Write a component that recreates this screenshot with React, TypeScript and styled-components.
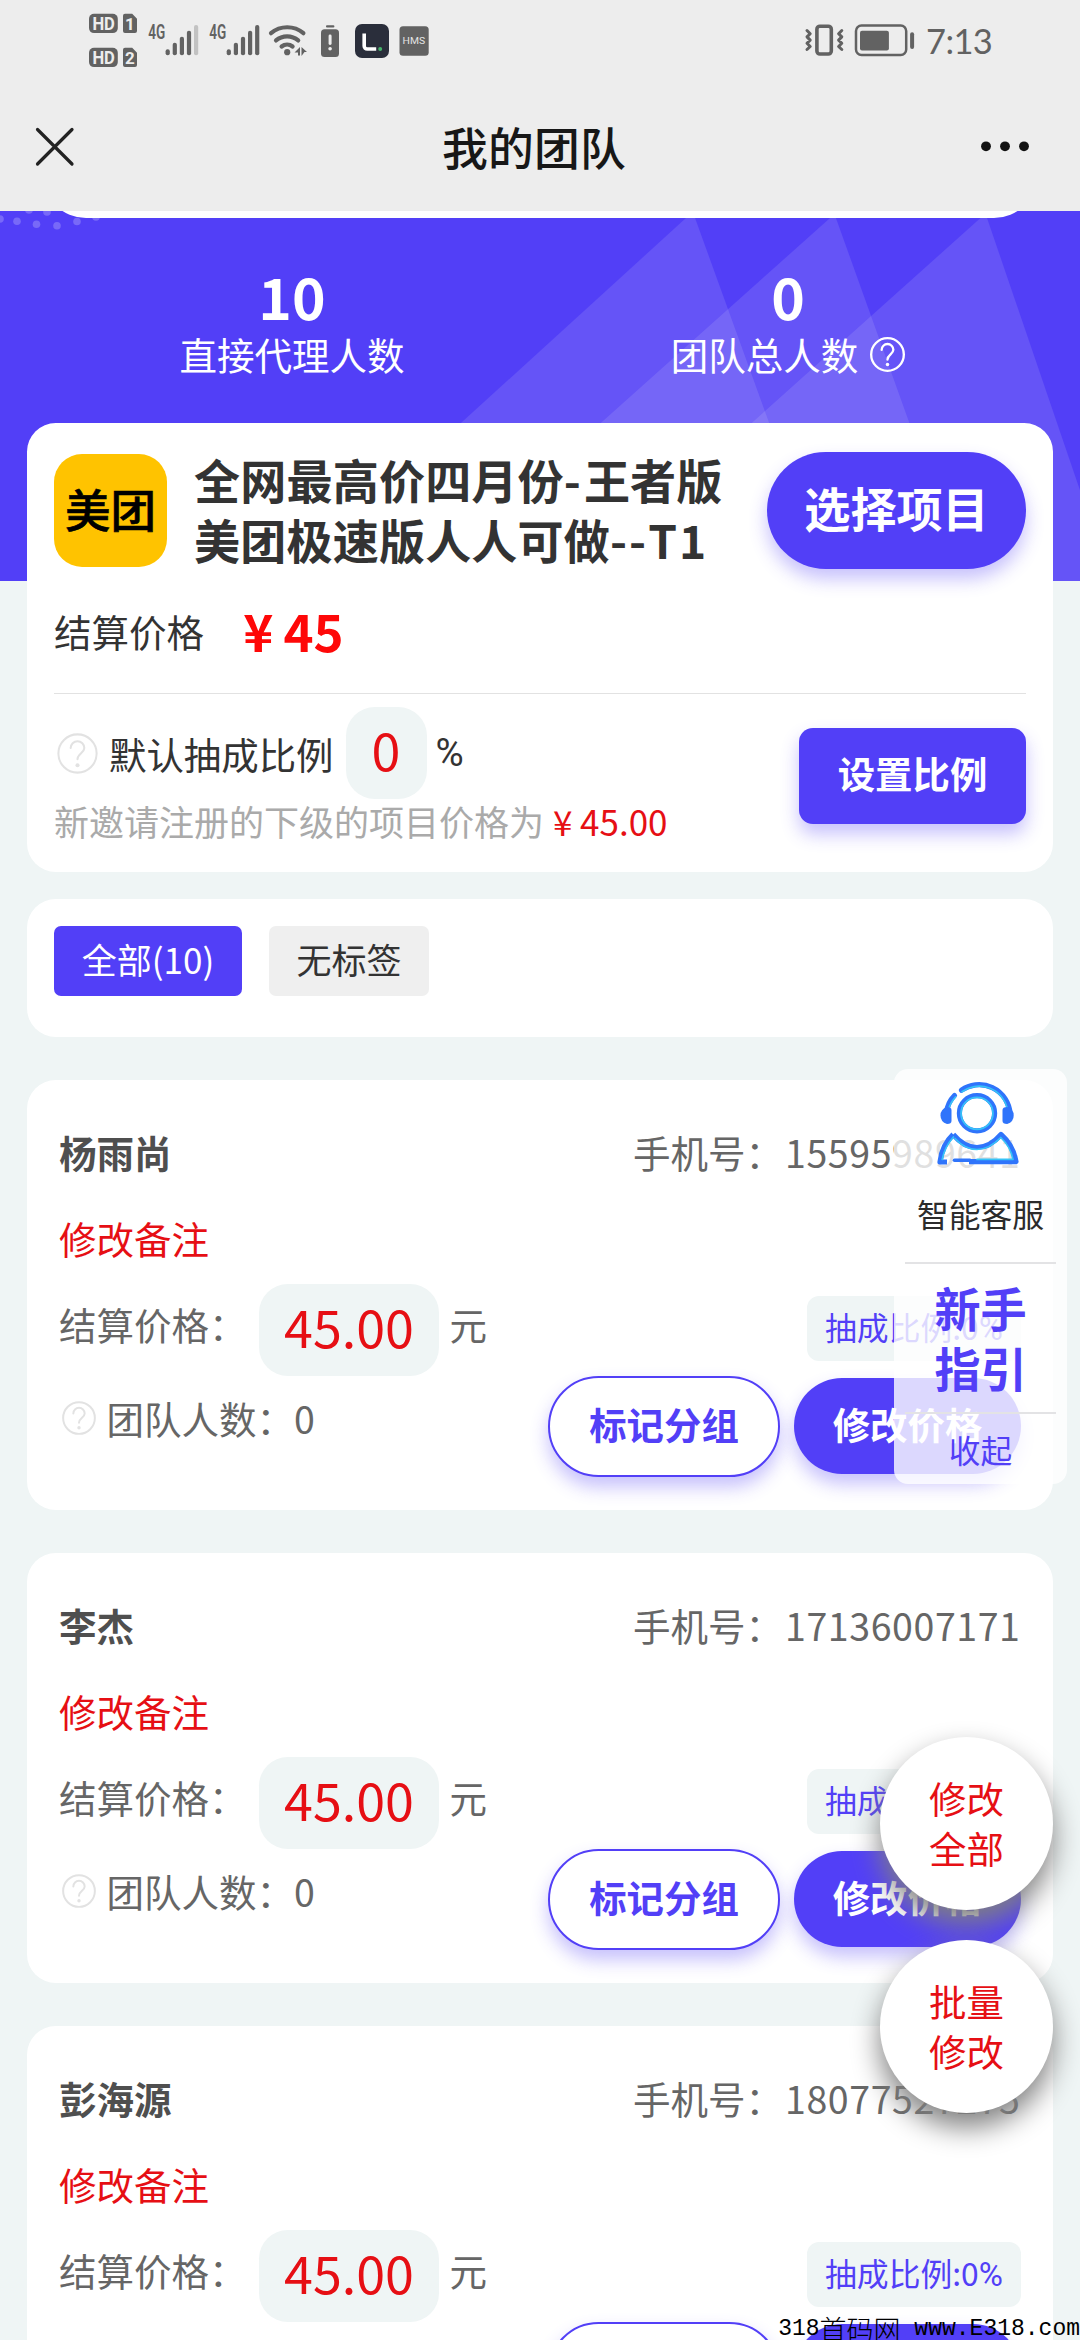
import React from 'react';
import styled, { createGlobalStyle } from 'styled-components';

const BLUE = '#523ff7';
const RED = '#e60f14';
const PAGE = '#eff5f5';
const STATUS = '#626262';

const GlobalStyle = createGlobalStyle`
  *, *::before, *::after { box-sizing: border-box; }
  html, body { margin: 0; padding: 0; background: ${PAGE}; }
  body {
    font-family: "Noto Sans CJK SC", "Noto Sans", sans-serif;
    color: #333;
    overflow: hidden;
  }
  button { font-family: inherit; border: 0; padding: 0; margin: 0; }
`;

const Screen = styled.div`
  position: relative;
  width: 1080px;
  height: 2340px;
  overflow: hidden;
  background: ${PAGE};
`;

/* ---------- top bars ---------- */

const TopArea = styled.header`
  height: 211px;
  background: #ededed;
`;

const StatusBar = styled.div`
  height: 76px;
  display: flex;
  justify-content: space-between;
  padding: 0 84px;
`;

const StatusGroup = styled.div`
  display: flex;
  align-items: center;
`;

const StatusSvg = styled.svg`
  display: block;
  height: 76px;
  fill: ${STATUS};
  font-family: Roboto, sans-serif;
`;

const Clock = styled.span`
  font-family: Lato, sans-serif;
  font-size: 34.5px;
  line-height: 76px;
  letter-spacing: -0.6px;
  color: ${STATUS};
  margin-left: 9px;
  padding-top: 6px;
  width: 70px;
`;

const TitleBar = styled.div`
  height: 135px;
  display: flex;
  align-items: flex-start;
  justify-content: space-between;
  padding: 42px 48px 0 33px;
`;

const Title = styled.h1`
  margin: 0;
  font-size: 45.8px;
  line-height: 56px;
  font-weight: 500;
  color: #171717;
  letter-spacing: 0.2px;
  padding-left: 11px;
`;

const BarIcon = styled.svg`
  display: block;
  height: 56px;
`;

/* ---------- hero ---------- */

const Hero = styled.section`
  position: relative;
  height: 370px;
  background: ${BLUE};
`;

const HeroArt = styled.svg`
  position: absolute;
  inset: 0;
  width: 1080px;
  height: 370px;
`;

const Stats = styled.div`
  position: relative;
  display: grid;
  grid-template-columns: 496px 496px;
  padding: 45px 44px 0;
  color: #fff;
`;

const Stat = styled.div`
  display: flex;
  flex-direction: column;
  align-items: center;
`;

const StatValue = styled.strong`
  font-size: 57px;
  line-height: 79px;
  font-weight: 700;
`;

const StatLabel = styled.span`
  display: flex;
  align-items: center;
  gap: 12px;
  font-size: 37.5px;
  line-height: 38px;
`;

/* ---------- cards ---------- */

const Content = styled.main`
  position: relative;
  margin-top: -158px;
  padding: 0 27px;
  display: flex;
  flex-direction: column;
`;

const Card = styled.section`
  background: #fff;
  border-radius: 28.8px;
`;

const ProjectCard = styled(Card)`
  height: 449px;
  padding: 29px 27px 0;
`;

const ProjectHead = styled.div`
  display: flex;
  align-items: flex-start;
  height: 120px;
`;

const Logo = styled.div`
  width: 113px;
  height: 113px;
  margin-top: 2px;
  border-radius: 28px;
  background: #ffc300;
  color: #000;
  font-size: 45.5px;
  line-height: 109px;
  font-weight: 500;
  -webkit-text-stroke: 0.6px #000;
  text-align: center;
`;

const ProjectTitle = styled.h2`
  margin: -3.5px 0 0 27px;
  width: 560px;
  font-size: 46.08px;
  line-height: 60.2px;
  letter-spacing: 0.15px;
  font-weight: 700;
  color: #333;
`;

const Loose = styled.span<{ $gap: number }>`
  letter-spacing: ${(p) => p.$gap}px;
`;

const Solid = styled.button<{ $w: number; $h: number; $r: number; $size: number; $lift?: number }>`
  flex: none;
  width: ${(p) => p.$w}px;
  height: ${(p) => p.$h}px;
  border-radius: ${(p) => p.$r}px;
  padding-bottom: ${(p) => p.$lift ?? 5}px;
  background: ${BLUE};
  color: #fff;
  font-size: ${(p) => p.$size}px;
  line-height: 1;
  font-weight: 700;
  box-shadow: 0 10px 18px rgba(82, 63, 247, 0.32);
`;

const PickButton = styled(Solid)`
  margin-left: auto;
`;

const PriceRow = styled.div`
  display: flex;
  align-items: center;
  height: 122px;
  border-bottom: 1px solid #e2e2e2;
  padding-bottom: 5px;
  font-size: 37.5px;
`;

const PriceValue = styled.strong`
  margin-left: 27px;
  margin-top: -1px;
  font-size: 51px;
  line-height: 60px;
  color: #fe0808;
`;

const Yen = styled.span`
  display: inline-block;
  width: 1.03em;
  padding-left: 0.04em;
  text-align: center;
`;

const RatioRow = styled.div`
  display: flex;
  justify-content: space-between;
`;

const RatioLeft = styled.div`
  padding-top: 13px;
`;

const RatioLine = styled.div`
  display: flex;
  align-items: center;
  height: 92px;
  font-size: 37.44px;
  padding-left: 3px;
`;

const RatioLabel = styled.span`
  margin-left: 11px;
  margin-top: 2px;
  line-height: 46px;
`;

const Field = styled.span<{ $w: number; $ml: number }>`
  flex: none;
  width: ${(p) => p.$w}px;
  height: 92px;
  margin-left: ${(p) => p.$ml}px;
  border-radius: 28.8px;
  background: ${PAGE};
  color: ${RED};
  font-size: 52px;
  line-height: 84px;
  text-align: center;
`;

const Percent = styled.span<{ $size: number }>`
  font-family: Roboto, sans-serif;
  font-size: ${(p) => p.$size}px;
`;

const RatioPercent = styled(Percent)`
  margin-left: 9px;
  margin-top: -2px;
`;

const RatioNote = styled.p`
  margin: 0;
  font-size: 35px;
  line-height: 44px;
  color: #aaa;
  white-space: nowrap;
`;

const NoteAmount = styled.span`
  color: ${RED};
`;

const RatioButton = styled(Solid)`
  margin-top: 34px;
`;

const TabCard = styled(Card)`
  margin-top: 27px;
  height: 138px;
  padding: 27px;
  display: flex;
  align-items: flex-start;
  gap: 27px;
`;

const Tab = styled.span<{ $active?: boolean; $w: number }>`
  width: ${(p) => p.$w}px;
  height: 70px;
  border-radius: 7px;
  background: ${(p) => (p.$active ? BLUE : '#efefef')};
  color: ${(p) => (p.$active ? '#fff' : '#333')};
  font-size: 35px;
  line-height: 66px;
  text-align: center;
`;

/* ---------- members ---------- */

const MemberCard = styled(Card)`
  height: 430px;
  margin-top: 43px;
  padding: 47px 32px 0;
  color: #666;
  font-size: 37.5px;
  line-height: 49px;
`;

const MemberHead = styled.div`
  display: flex;
  justify-content: space-between;
`;

const MemberName = styled.strong`
  color: #4f4f4f;
`;

const Phone = styled.span`
  width: 388px;
  white-space: nowrap;
`;

const PhoneDigits = styled.span`
  margin-left: 2px;
  letter-spacing: 0.6px;
`;

const EditNote = styled.div`
  margin-top: 36.5px;
  color: ${RED};
`;

const MemberBody = styled.div`
  margin-top: 22.5px;
  display: flex;
  justify-content: space-between;
`;

const MemberPrice = styled.div`
  display: flex;
  align-items: center;
  height: 92px;
`;

const RowText = styled.span`
  padding-bottom: 14px;
`;

const Unit = styled(RowText)`
  margin-left: 10.5px;
`;

const TeamLine = styled.div`
  display: flex;
  align-items: center;
  margin-top: 17px;
  padding-left: 2.5px;
  gap: 11px;
`;

const MemberActions = styled.div`
  display: flex;
  flex-direction: column;
  align-items: flex-end;
  padding-top: 12.3px;
`;

const RatioTag = styled.span`
  width: 214px;
  height: 65px;
  border-radius: 12px;
  background: ${PAGE};
  color: ${BLUE};
  font-size: 31.8px;
  line-height: 61px;
  text-align: center;
  white-space: nowrap;
`;

const ButtonRow = styled.div`
  margin-top: 14.5px;
  display: flex;
  align-items: center;
  gap: 14px;
`;

const Outline = styled.button`
  width: 232px;
  height: 101px;
  border: 2px solid ${BLUE};
  border-radius: 51px;
  padding-bottom: 3px;
  background: #fff;
  color: ${BLUE};
  font-size: 37.44px;
  line-height: 1;
  font-weight: 700;
  box-shadow: 0 10px 18px rgba(82, 63, 247, 0.32);
`;

/* ---------- floating layers ---------- */

const ServicePanel = styled.aside`
  position: absolute;
  left: 894px;
  top: 1069px;
  width: 173px;
  height: 415px;
  border-radius: 14px;
  background: rgba(255, 255, 255, 0.8);
  display: flex;
  flex-direction: column;
  align-items: center;
  padding-top: 12.5px;
`;

const ServiceIcon = styled.svg`
  display: block;
  flex: none;
  width: 82px;
  height: 83px;
  margin-right: 5px;
`;

const ServiceText = styled.span`
  margin-top: 28px;
  font-size: 31.8px;
  line-height: 40px;
  color: #2c2c2c;
`;

const PanelLine = styled.i<{ $top: number }>`
  flex: none;
  width: 151px;
  height: 2px;
  margin-top: ${(p) => p.$top}px;
  background: #e3e3e5;
`;

const Guide = styled.strong`
  margin-top: 13px;
  width: 92.2px;
  font-size: 46.08px;
  line-height: 60.4px;
  color: ${BLUE};
`;

const Collapse = styled.span`
  margin-top: 15px;
  font-size: 31.68px;
  line-height: 40px;
  color: ${BLUE};
`;

const RoundActions = styled.div`
  position: absolute;
  left: 880px;
  top: 1737px;
  display: flex;
  flex-direction: column;
  gap: 30px;
`;

const RoundButton = styled.button`
  width: 173px;
  height: 173px;
  border-radius: 50%;
  padding: 0 49px 2px;
  background: #fff;
  color: ${RED};
  font-size: 37.44px;
  line-height: 50px;
  box-shadow: 0 14.4px 28.8px #808080;
`;

const Watermark = styled.div`
  position: absolute;
  right: 0;
  bottom: -3px;
  display: flex;
  align-items: center;
  font-family: "Liberation Mono", "Noto Sans CJK SC", monospace;
  font-size: 23px;
  line-height: 28px;
  color: #000;
  white-space: pre;
`;

const WatermarkCjk = styled.span`
  font-size: 27px;
  font-family: "Noto Sans CJK SC", sans-serif;
  font-weight: 300;
`;

/* ---------- drawings ---------- */

function Help({ size, color, stroke }: { size: number; color: string; stroke: number }) {
  return (
    <svg width={size} height={size} viewBox="0 0 24 24" fill="none" stroke={color} strokeWidth={stroke}>
      <circle cx="12" cy="12" r="11.2" />
      <path d="M8 8.8a4 4 0 0 1 8 0c0 2.900-4 3.300-4 6.600" strokeLinecap="round" />
      <circle cx="12" cy="18.900" r="1.200" fill={color} stroke="none" />
    </svg>
  );
}

function Signal({ x, weak }: { x: number; weak?: boolean }) {
  const tops = [49.3, 42.7, 36.7, 30.7, 25];
  return (
    <>
      <text x={x - 19.5} y={38.6} fontSize="19.5" fontWeight="600" textLength="17" lengthAdjust="spacingAndGlyphs">4G</text>
      {tops.map((t, i) => (
        <rect key={t} x={x - 2.1 + i * 7.1} y={t} width="4.2" height={55.3 - t} rx="2" fill={weak && i === 4 ? '#c2c2c2' : STATUS} />
      ))}
    </>
  );
}

function StatusLeft() {
  return (
    <StatusGroup>
      <StatusSvg width="62" viewBox="84 0 62 76">
        {[13.7, 47.7].map((y, i) => (
          <g key={y}>
            <rect x="89" y={y} width="28.8" height="19.4" rx="5" />
            <text x="92.4" y={y + 15.9} fontSize="17.6" fontWeight="700" fill="#ededed" textLength="22.5" lengthAdjust="spacingAndGlyphs">HD</text>
            <path d={`M125 ${y}h7.2l4.8 5v12.4a2 2 0 0 1-2 2h-10a2 2 0 0 1-2-2v-15.4a2 2 0 0 1 2-2z`} />
            <text x="130" y={y + 16} fontSize="17" fontWeight="700" fill="#ededed" textAnchor="middle">{i + 1}</text>
          </g>
        ))}
      </StatusSvg>
      <StatusSvg width="120" viewBox="146 0 120 76">
        <Signal x={167.7} weak />
        <Signal x={228.8} />
      </StatusSvg>
      <StatusSvg width="47" viewBox="266 0 47 76">
        <g fill="none" stroke={STATUS} strokeWidth="4.2" strokeLinecap="round">
          <path d="M271 33.2a25 25 0 0 1 32.4 0" />
          <path d="M276 40.4a17 17 0 0 1 22.2 0" />
          <path d="M281.6 46.5a9 9 0 0 1 11 0" />
        </g>
        <circle cx="287.2" cy="52.2" r="3.1" />
        <path d="M294.500 52.500l5.500-5.500v8.500h-2v-3zM301.500 47l5.500 5h-2.500l-3 4z" />
      </StatusSvg>
      <StatusSvg width="36" viewBox="313 0 36 76">
        <rect x="326" y="25.2" width="8.4" height="2.2" rx="1" />
        <rect x="321" y="29.2" width="18" height="27.8" rx="3.5" />
        <rect x="328.6" y="34.5" width="3" height="10.5" rx="1.4" fill="#ededed" />
        <circle cx="330.1" cy="48.8" r="1.8" fill="#ededed" />
      </StatusSvg>
      <StatusSvg width="44" viewBox="349 0 44 76">
        <rect x="355" y="24" width="34" height="34" rx="7" fill="#2a2e3b" />
        <path d="M364.2 33.5v12.500a3 3 0 0 0 3 3h9" fill="none" stroke="#fff" strokeWidth="3.6" />
        <circle cx="380.2" cy="49" r="2" fill="#47b36b" />
      </StatusSvg>
      <StatusSvg width="40" viewBox="393 0 40 76">
        <rect x="399.5" y="26.3" width="29.2" height="29.4" rx="3.5" />
        <text x="402.6" y="44.2" fontSize="9" fontWeight="400" fill="#e4e4e4" textLength="22.5" lengthAdjust="spacingAndGlyphs">HMS</text>
      </StatusSvg>
    </StatusGroup>
  );
}

function StatusRight() {
  return (
    <StatusGroup>
      <StatusSvg width="48" viewBox="800 0 48 76">
        <rect x="815.9" y="26.2" width="14.4" height="27.8" rx="3" fill="none" stroke={STATUS} strokeWidth="3.6" />
        <g fill="none" stroke={STATUS} strokeWidth="3" strokeLinecap="round" strokeLinejoin="round">
          <path d="M806 30.500l3.200 3.200-3.200 3.200 3.200 3.200-3.200 3.200 3.200 3.200-3.200 3" />
          <path d="M840.800 30.500l-3.200 3.200 3.200 3.200-3.200 3.200 3.200 3.200-3.200 3.200 3.200 3" />
        </g>
      </StatusSvg>
      <StatusSvg width="68" viewBox="848 0 68 76">
        <rect x="855" y="25.5" width="50.2" height="29.6" rx="5.5" fill="none" stroke={STATUS} strokeWidth="2.5" />
        <rect x="859" y="30.7" width="28.9" height="19.8" rx="2" />
        <rect x="909.1" y="32.3" width="4" height="16.7" rx="2" />
      </StatusSvg>
      <Clock>7:13</Clock>
    </StatusGroup>
  );
}

function HeadsetPerson() {
  return (
    <ServiceIcon viewBox="0 0 82 83" fill="none">
      <g stroke="#2f74fb" strokeWidth="5.2" strokeLinecap="round" strokeLinejoin="round">
        <circle cx="40" cy="31.3" r="17.6" />
        <path d="M24.500 8.200A31 31 0 0 1 73 31" />
        <path d="M17.500 13.500Q11 20 9.500 30" />
        <path d="M16.200 52.500Q5 63 3 80H10" strokeLinecap="butt" />
        <path d="M16.200 52.500Q27 65.500 40 65.500T64 52.500Q76 63 79 79.600H32" strokeLinecap="butt" />
        <path d="M17.500 78.300H33" strokeWidth="3.6" />
      </g>
      <g stroke="#37c3f7" strokeWidth="1.7" strokeLinecap="round" strokeLinejoin="round">
        <circle cx="40" cy="31.3" r="16" />
        <path d="M25 9.800A29 29 0 0 1 70.500 27" />
        <path d="M18.500 15Q13 21 11.500 28" />
        <path d="M16.400 55Q7.500 65 5.200 77.500" />
        <path d="M18 56.500Q28 67.500 40 67.500T63.800 55.500Q73.500 64.500 76 77.400H40" />
      </g>
      <path d="M10 25q4.500 0 4.500 3v11q0 3-4.500 3-6.500-2-6.500-8.500T10 25z" fill="#2f74fb" />
      <path d="M70.200 25q-4.700 0-4.700 3v11q0 3 4.700 3 6.500-2 6.500-8.500T70.200 25z" fill="#2f74fb" />
    </ServiceIcon>
  );
}

const dots: [number, number][] = [[0, 8], [17, 10.3], [36.5, 13.3], [57, 14.7], [77, 10.5], [96, 6], [47, 1], [29, -1]];

const members = [
  { name: '杨雨尚', phone: '15595989641' },
  { name: '李杰', phone: '17136007171' },
  { name: '彭海源', phone: '18077527275' },
];

function Member({ name, phone }: { name: string; phone: string }) {
  return (
    <MemberCard>
      <MemberHead>
        <MemberName>{name}</MemberName>
        <Phone>手机号：<PhoneDigits>{phone}</PhoneDigits></Phone>
      </MemberHead>
      <EditNote>修改备注</EditNote>
      <MemberBody>
        <div>
          <MemberPrice>
            <RowText>结算价格：</RowText>
            <Field $w={180} $ml={12.5}>45.00</Field>
            <Unit>元</Unit>
          </MemberPrice>
          <TeamLine>
            <Help size={34} color="#e2e2e2" stroke={1.4} />
            <span>团队人数：0</span>
          </TeamLine>
        </div>
        <MemberActions>
          <RatioTag>抽成比例:0<Percent $size={33}>%</Percent></RatioTag>
          <ButtonRow>
            <Outline>标记分组</Outline>
            <Solid $w={227} $h={96} $r={48} $size={37.44} $lift={3}>修改价格</Solid>
          </ButtonRow>
        </MemberActions>
      </MemberBody>
    </MemberCard>
  );
}

export default function App() {
  return (
    <Screen>
      <GlobalStyle />
      <TopArea>
        <StatusBar>
          <StatusLeft />
          <StatusRight />
        </StatusBar>
        <TitleBar>
          <BarIcon width="44" viewBox="33 118 44 56">
            <path d="M37.500 129.500l34.500 34.500M72 129.500l-34.500 34.500" stroke="#222" strokeWidth="3.2" strokeLinecap="round" />
          </BarIcon>
          <Title>我的团队</Title>
          <BarIcon width="52" viewBox="980 118 52 56">
            {[986, 1005, 1024].map((x) => <circle key={x} cx={x} cy="146.3" r="4.9" fill="#111" />)}
          </BarIcon>
        </TitleBar>
      </TopArea>

      <Hero>
        <HeroArt viewBox="0 0 1080 370">
          <g fill="#fff" fillOpacity="0.11">
            <path d="M692.800 0.800L287.500 370H826.300z" />
            <path d="M834.500 3L424 370H966z" />
            <path d="M985.500 2.500L575.500 370H1111z" />
          </g>
          {dots.map(([x, y]) => <circle key={x} cx={x} cy={y} r="3.8" fill="#fff" fillOpacity="0.22" />)}
          <rect x="43" y="-93" width="994" height="100" rx="43" fill="#fff" />
        </HeroArt>
        <Stats>
          <Stat>
            <StatValue>10</StatValue>
            <StatLabel>直接代理人数</StatLabel>
          </Stat>
          <Stat>
            <StatValue>0</StatValue>
            <StatLabel>团队总人数<Help size={35} color="#fff" stroke={1.6} /></StatLabel>
          </Stat>
        </Stats>
      </Hero>

      <Content>
        <ProjectCard>
          <ProjectHead>
            <Logo>美团</Logo>
            <ProjectTitle>
              全网最高价四月份<Loose $gap={3}>-</Loose>王者版
              <br />
              美团极速版人人可做<Loose $gap={2}>--T1</Loose>
            </ProjectTitle>
            <PickButton $w={259} $h={117} $r={58.5} $size={46.08} $lift={6}>选择项目</PickButton>
          </ProjectHead>
          <PriceRow>
            <span>结算价格</span>
            <PriceValue><Yen>¥</Yen>45</PriceValue>
          </PriceRow>
          <RatioRow>
            <RatioLeft>
              <RatioLine>
                <Help size={41} color="#e2e2e2" stroke={1.2} />
                <RatioLabel>默认抽成比例</RatioLabel>
                <Field $w={81} $ml={12}>0</Field>
                <RatioPercent $size={38.5}>%</RatioPercent>
              </RatioLine>
              <RatioNote>新邀请注册的下级的项目价格为<NoteAmount><Yen>¥</Yen>45.00</NoteAmount></RatioNote>
            </RatioLeft>
            <RatioButton $w={227} $h={96} $r={14} $size={37.44}>设置比例</RatioButton>
          </RatioRow>
        </ProjectCard>

        <TabCard>
          <Tab $active $w={188}>全部(10)</Tab>
          <Tab $w={160}>无标签</Tab>
        </TabCard>

        {members.map((m) => <Member key={m.phone} {...m} />)}
      </Content>

      <ServicePanel>
        <HeadsetPerson />
        <ServiceText>智能客服</ServiceText>
        <PanelLine $top={29} />
        <Guide>新手指引</Guide>
        <PanelLine $top={14.5} />
        <Collapse>收起</Collapse>
      </ServicePanel>

      <RoundActions>
        <RoundButton>修改全部</RoundButton>
        <RoundButton>批量修改</RoundButton>
      </RoundActions>

      <Watermark>318<WatermarkCjk>首码网</WatermarkCjk> www.E318.com</Watermark>
    </Screen>
  );
}
